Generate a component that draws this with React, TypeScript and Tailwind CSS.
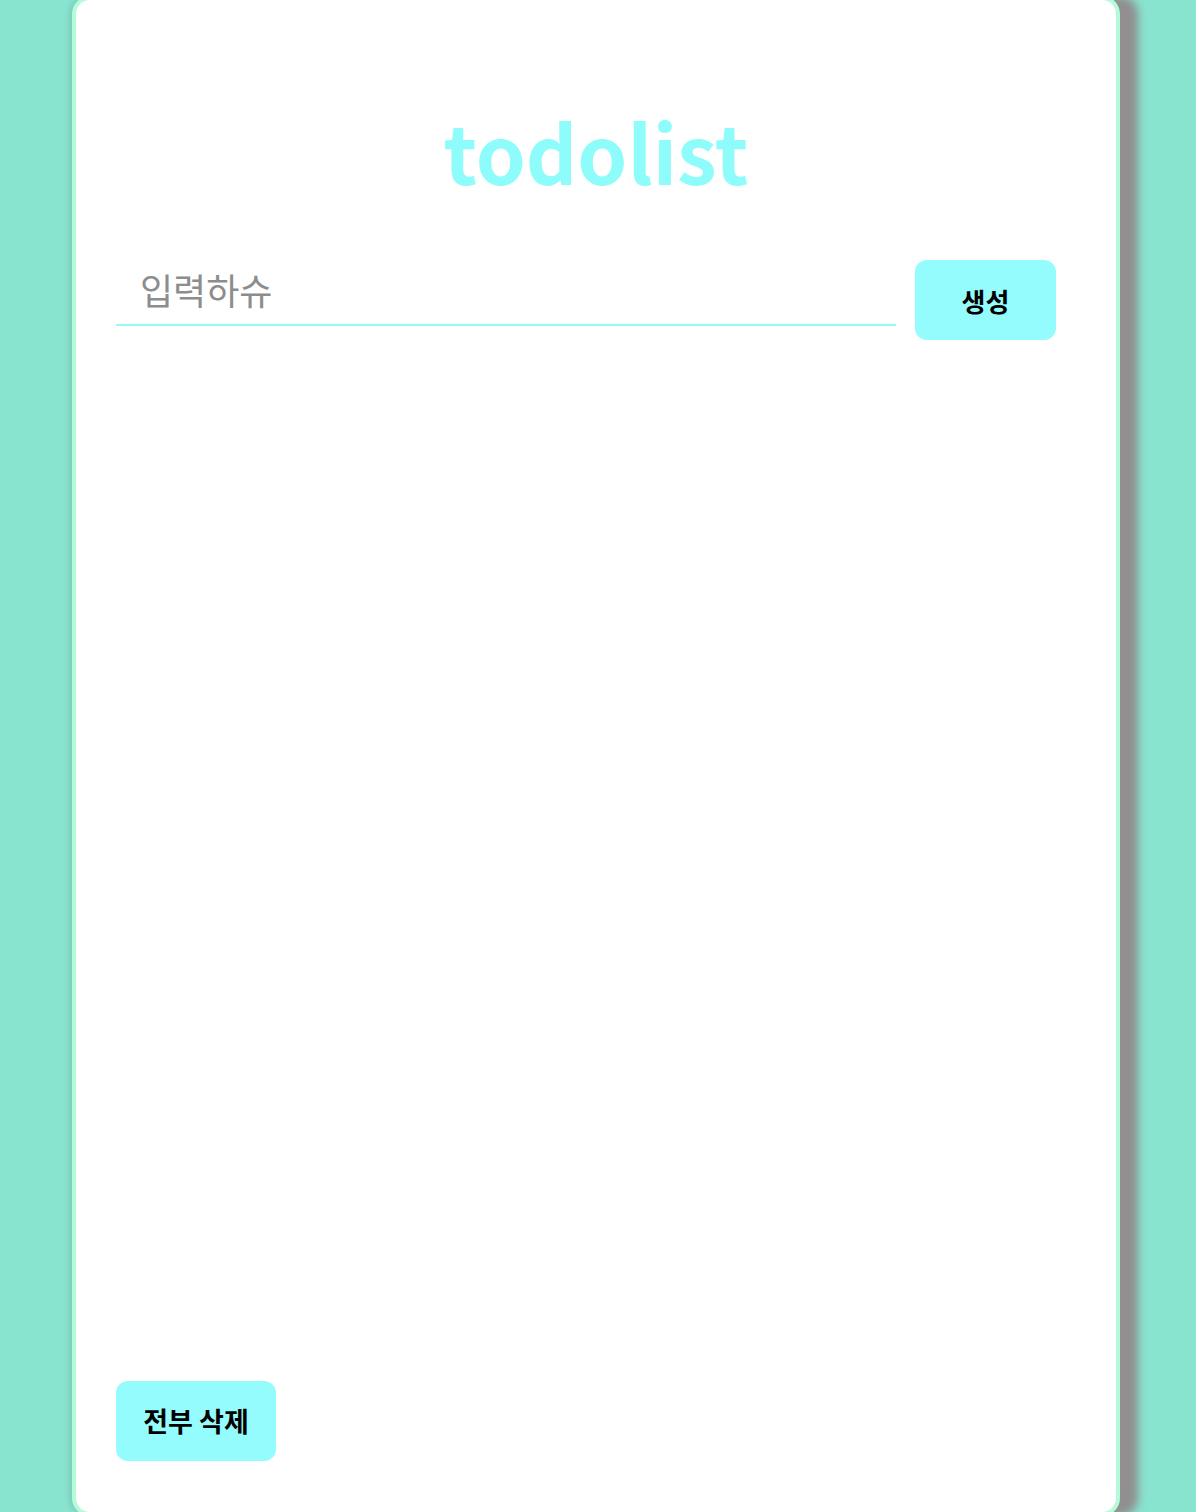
import React, { useState } from 'react';

const font = "font-['Noto_Sans_CJK_KR',_'Noto_Sans',_sans-serif]";

const App = () => {
    const [text, setText] = useState('');

    return (
        <div className={`h-screen w-full overflow-hidden bg-[#88e3cf] flex items-center justify-center ${font}`}>
            {/* card */}
            <div className="flex flex-col shrink-0 mr-1 w-[1048px] h-[1520px] bg-white border-4 border-[#b4fbdc] rounded-[18px] shadow-[18px_0_8px_#918f8f,-2px_0_6px_rgba(0,0,0,0.12)] px-10 pb-[51px]">
                <h1 className="mt-[110px] text-center text-[80px] leading-none font-bold text-[#8ffcfc]">
                    todolist
                </h1>

                <div className="flex items-start mt-[68px]">
                    <input
                        value={text}
                        onChange={(e) => setText(e.target.value)}
                        placeholder="입력하슈"
                        className="w-[780px] h-[68px] pl-6 pb-1 text-[36px] text-gray-700 placeholder:text-[#8d8d8d] border-b-2 border-[#93fbf7] outline-none"
                    />
                    <button className="ml-[19px] mt-[2px] w-[141px] h-[80px] rounded-xl bg-[#94fcfc] text-[26px] font-bold text-black">
                        생성
                    </button>
                </div>

                <ul className="flex-1"></ul>

                <div>
                    <button className="w-[160px] h-[80px] rounded-xl bg-[#94fcfc] text-[27px] font-bold text-black">
                        전부 삭제
                    </button>
                </div>
            </div>
        </div>
    );
};

export default App;
